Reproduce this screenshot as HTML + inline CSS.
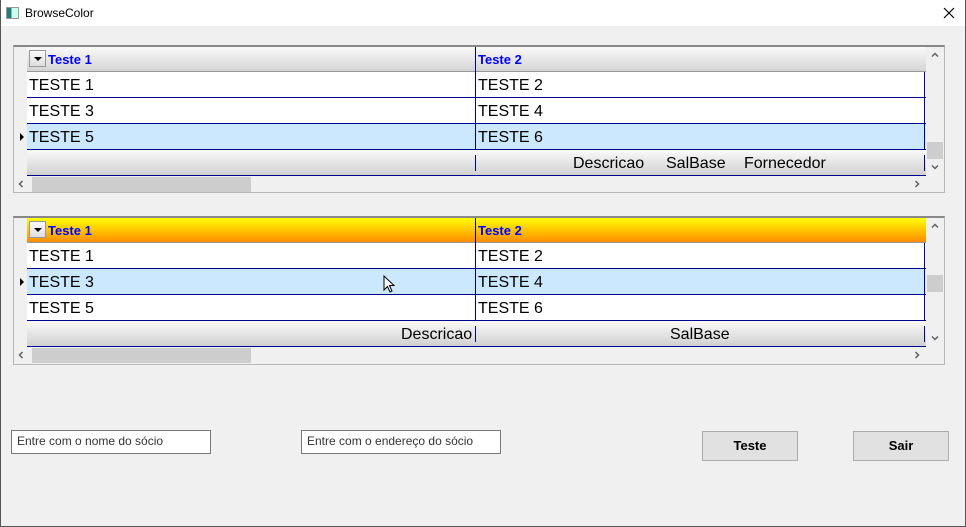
<!DOCTYPE html>
<html><head><meta charset="utf-8"><style>
*{margin:0;padding:0;box-sizing:border-box}
body{width:966px;height:527px;background:#f0f0f0;position:relative;overflow:hidden;font-family:"Liberation Sans",sans-serif}
.a{position:absolute}
.win{left:0;top:0;width:966px;height:527px;border:1px solid #555;border-top:none}
.title{left:0;top:0;width:966px;height:26px;background:#fff;font-size:12px;color:#000}
.grid{border:1px solid #b8b8b8;border-top:2px solid #888;background:#f0f0f0}
.hdr{background:linear-gradient(#fafafa,#d4d4d4);border-bottom:1px solid #999}
.hdr2{background:linear-gradient(#ffff00,#ff8c00);border-bottom:1px solid #999}
.ht{font-size:13px;font-weight:bold;color:#0000ff;top:6px}
.row{background:#fff;border-bottom:1px solid #000090;font-size:16px;color:#000}
.sel{background:#cce8ff}
.cell{top:5px}
.foot{background:linear-gradient(#fafafa,#d0d0d0);border-bottom:1px solid #000090;font-size:16px}
.vd{width:1px;background:#000090}
.thumb{background:#cdcdcd}
.dd{width:17px;height:17px;border:1px solid #999;background:linear-gradient(#fafafa,#ddd)}
.inp{background:#fff;border:1px solid #7a7a7a;font-size:12px;color:#333;padding:3px 0 0 5px}
.btn{background:#e1e1e1;border:1px solid #adadad;font-size:13px;font-weight:bold;text-align:center;line-height:28px}
</style></head><body>
<div class="a title"><div class="a" style="left:6px;top:7px;width:13px;height:12px;border:1px solid #999;background:linear-gradient(90deg,#2a7a7a 40%,#cfe 40%)"></div><div class="a" style="left:25px;top:6px">BrowseColor</div>
<svg class="a" style="left:943px;top:7px" width="12" height="12"><path d="M1 1L11 11M11 1L1 11" stroke="#000" stroke-width="1.2"/></svg></div>

<!-- grid 1 -->
<div class="a grid" style="left:13px;top:45px;width:932px;height:148px"></div>
<div class="a hdr" style="left:27px;top:47px;width:899px;height:25px"></div>
<div class="a dd" style="left:29px;top:50px"></div><div class="a" style="left:34px;top:57px;border:4px solid transparent;border-top:4px solid #000;border-bottom:none"></div>
<div class="a ht" style="left:48px;top:52px">Teste 1</div>
<div class="a ht" style="left:478px;top:52px">Teste 2</div>
<div class="a vd" style="left:475px;top:47px;height:25px"></div>
<div class="a row" style="left:27px;top:72px;width:899px;height:26px"><span class="a cell" style="left:2px">TESTE 1</span><span class="a cell" style="left:451px">TESTE 2</span></div>
<div class="a row" style="left:27px;top:98px;width:899px;height:26px"><span class="a cell" style="left:2px">TESTE 3</span><span class="a cell" style="left:451px">TESTE 4</span></div>
<div class="a row sel" style="left:27px;top:124px;width:899px;height:26px"><span class="a cell" style="left:2px">TESTE 5</span><span class="a cell" style="left:451px">TESTE 6</span></div>
<div class="a" style="left:20px;top:133px;border:4px solid transparent;border-left:4px solid #000;border-right:none"></div>
<div class="a vd" style="left:475px;top:72px;height:78px"></div><div class="a vd" style="left:924px;top:72px;height:78px"></div>
<div class="a foot" style="left:27px;top:150px;width:899px;height:26px"><span class="a" style="left:546px;top:5px">Descricao</span><span class="a" style="left:639px;top:5px">SalBase</span><span class="a" style="left:717px;top:5px">Fornecedor</span></div>
<div class="a vd" style="left:475px;top:155px;height:16px"></div><div class="a vd" style="left:924px;top:155px;height:16px"></div>
<div class="a thumb" style="left:32px;top:177px;width:219px;height:15px"></div>
<svg class="a" style="left:17px;top:180px" width="8" height="8"><path d="M5.5 1L2.5 4L5.5 7" stroke="#606060" stroke-width="1.5" fill="none"/></svg>
<svg class="a" style="left:913px;top:180px" width="8" height="8"><path d="M2.5 1L5.5 4L2.5 7" stroke="#606060" stroke-width="1.5" fill="none"/></svg>
<div class="a thumb" style="left:927px;top:142px;width:16px;height:17px"></div>
<svg class="a" style="left:931px;top:51px" width="8" height="8"><path d="M1 5.5L4 2.5L7 5.5" stroke="#606060" stroke-width="1.5" fill="none"/></svg>
<svg class="a" style="left:931px;top:163px" width="8" height="8"><path d="M1 2.5L4 5.5L7 2.5" stroke="#606060" stroke-width="1.5" fill="none"/></svg>

<!-- grid 2 -->
<div class="a grid" style="left:13px;top:216px;width:932px;height:149px"></div>
<div class="a hdr2" style="left:27px;top:218px;width:899px;height:25px"></div>
<div class="a dd" style="left:29px;top:221px"></div><div class="a" style="left:34px;top:228px;border:4px solid transparent;border-top:4px solid #000;border-bottom:none"></div>
<div class="a ht" style="left:48px;top:223px">Teste 1</div>
<div class="a ht" style="left:478px;top:223px">Teste 2</div>
<div class="a vd" style="left:475px;top:218px;height:25px"></div>
<div class="a row" style="left:27px;top:243px;width:899px;height:26px"><span class="a cell" style="left:2px">TESTE 1</span><span class="a cell" style="left:451px">TESTE 2</span></div>
<div class="a row sel" style="left:27px;top:269px;width:899px;height:26px"><span class="a cell" style="left:2px">TESTE 3</span><span class="a cell" style="left:451px">TESTE 4</span></div>
<div class="a row" style="left:27px;top:295px;width:899px;height:26px"><span class="a cell" style="left:2px">TESTE 5</span><span class="a cell" style="left:451px">TESTE 6</span></div>
<div class="a" style="left:20px;top:278px;border:4px solid transparent;border-left:4px solid #000;border-right:none"></div>
<div class="a vd" style="left:475px;top:243px;height:78px"></div><div class="a vd" style="left:924px;top:243px;height:78px"></div>
<div class="a foot" style="left:27px;top:321px;width:899px;height:26px"><span class="a" style="left:374px;top:5px">Descricao</span><span class="a" style="left:643px;top:5px">SalBase</span></div>
<div class="a vd" style="left:475px;top:326px;height:16px"></div><div class="a vd" style="left:924px;top:326px;height:16px"></div>
<svg class="a" style="left:383px;top:275px" width="12" height="19"><path d="M1 1V15L4.5 11.5L7 17L9 16L6.5 10.5H11Z" fill="#fff" stroke="#000"/></svg>
<div class="a thumb" style="left:32px;top:348px;width:219px;height:15px"></div>
<svg class="a" style="left:17px;top:351px" width="8" height="8"><path d="M5.5 1L2.5 4L5.5 7" stroke="#606060" stroke-width="1.5" fill="none"/></svg>
<svg class="a" style="left:913px;top:351px" width="8" height="8"><path d="M2.5 1L5.5 4L2.5 7" stroke="#606060" stroke-width="1.5" fill="none"/></svg>
<div class="a thumb" style="left:927px;top:275px;width:16px;height:17px"></div>
<svg class="a" style="left:931px;top:222px" width="8" height="8"><path d="M1 5.5L4 2.5L7 5.5" stroke="#606060" stroke-width="1.5" fill="none"/></svg>
<svg class="a" style="left:931px;top:334px" width="8" height="8"><path d="M1 2.5L4 5.5L7 2.5" stroke="#606060" stroke-width="1.5" fill="none"/></svg>

<div class="a inp" style="left:11px;top:430px;width:200px;height:24px">Entre com o nome do sócio</div>
<div class="a inp" style="left:301px;top:430px;width:200px;height:24px">Entre com o endereço do sócio</div>
<div class="a btn" style="left:702px;top:431px;width:96px;height:30px">Teste</div>
<div class="a btn" style="left:853px;top:431px;width:96px;height:30px">Sair</div>
<div class="a win"></div>
</body></html>
